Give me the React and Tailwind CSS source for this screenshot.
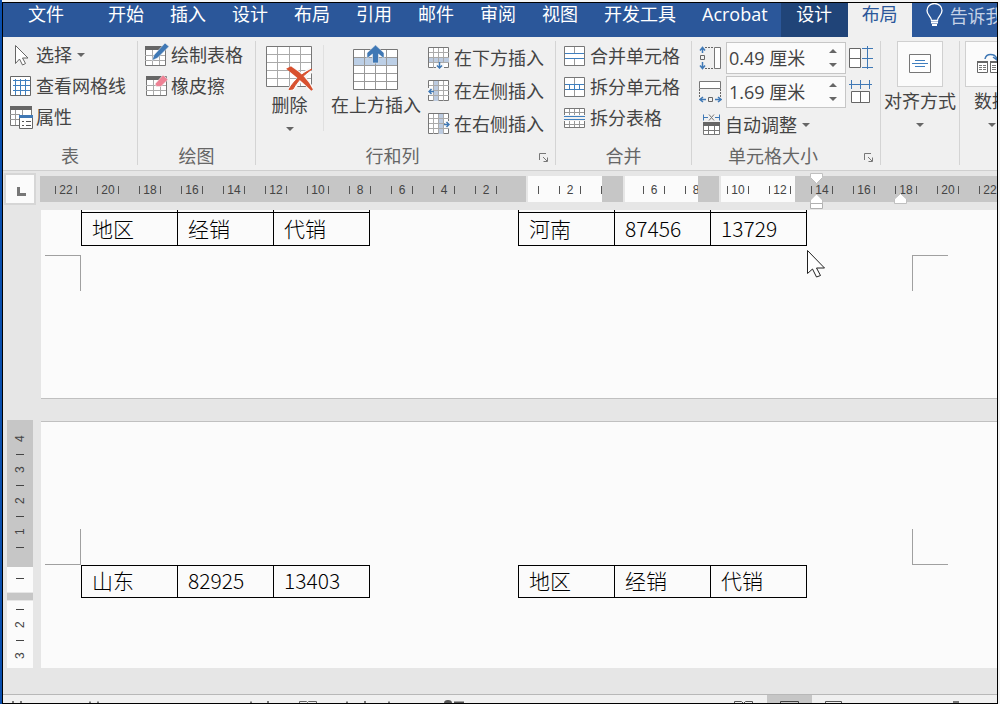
import clsx from 'clsx';

const TABS = ['开始', '插入', '设计', '布局', '引用', '邮件', '审阅', '视图', '开发工具', 'Acrobat'];

const RULER = [22, 20, 18, 16, 14, 12, 10, 8, 6, 4, 2, 0, 2, 4, 6, 8, 10, 12, 14, 16, 18, 20, 22];
const V_RULER = ['4', '3', '2', '1', '', '', '2', '3'];

/* ---------- icons ---------- */

function Icon({ w = 22, h = 22, children }) {
  return (
    <svg width={w} height={h} viewBox={`0 0 ${w} ${h}`} fill="none" className="shrink-0" aria-hidden="true">
      {children}
    </svg>
  );
}

function Caret({ up = false }) {
  return (
    <svg width="8" height="4" viewBox="0 0 8 4" className="shrink-0" aria-hidden="true">
      <path d={up ? 'M0 4h8L4 0z' : 'M0 0h8L4 4z'} fill="#666" />
    </svg>
  );
}

const SelectIcon = () => (
  <Icon>
    <path d="M5.500 1.500v18l4-4.500 3 6 3-1.500-3-5.500h5.500z" fill="#fff" stroke="#666" />
  </Icon>
);

const GridlinesIcon = () => (
  <Icon>
    <path d="M.5 1.500h20v19H.5z" fill="#fff" stroke="#666" />
    <path d="M5.500 4v16M10.500 4v16M15.500 4v16M3 5.500h17M3 10.500h17M3 15.500h17" stroke="#3f7fbf" />
  </Icon>
);

const PropertiesIcon = () => (
  <Icon w={23} h={23}>
    <path d="M.5.5h21v19H.5z" fill="#fff" stroke="#777" />
    <path d="M0 0h22v4H0z" fill="#666" />
    <path d="M0 8.500h10M0 13.500h9M5.500 4v15M12.500 4v6" stroke="#999" />
    <path d="M9.500 9.500h13v13h-13z" fill="#fff" stroke="#666" />
    <path d="M9 9h14v3H9z" fill="#3f78b5" />
    <path d="M12 15.500h2m2 0h5M12 19.500h2m2 0h5" stroke="#555" />
  </Icon>
);

const DrawTableIcon = () => (
  <Icon w={24} h={24}>
    <path d="M.5 3.500h20v19H.5z" fill="#fff" stroke="#777" />
    <path d="M0 3h21v4H0z" fill="#666" />
    <path d="M0 12.500h20M0 17.500h20M7.500 7v15M14.500 7v15" stroke="#aaa" />
    <path d="M20 0l4 3.500L12.500 15 7 17.500 9 12z" fill="#3f78b5" stroke="#f0f0f0" strokeWidth=".6" />
  </Icon>
);

const EraserIcon = () => (
  <Icon w={24} h={22}>
    <path d="M1.500 1.500h20v19h-20z" fill="#fff" stroke="#777" />
    <path d="M1 1h15v4H1z" fill="#666" />
    <path d="M1 10.500h20M1 15.500h20M8.500 5v15M15.500 5v15" stroke="#aaa" />
    <path d="M18 0l5 4.500-7 7h-4.500L10 9z" fill="#ee8295" stroke="#f0f0f0" strokeWidth=".6" />
  </Icon>
);

const DeleteIcon = () => (
  <Icon w={48} h={46}>
    <path d="M.5 1.500h45v40H.5z" fill="#fff" stroke="#777" />
    <path d="M11.500 2v39M23.500 2v39M34.500 2v39M1 9.500h44M1 17.500h44M1 25.500h44M1 33.500h44" stroke="#aaa" />
    <path d="M25 24c7 4 15 11 20 20M45 25c-7 5-13 11-20 19" stroke="#f8f8f8" strokeWidth="6" />
    <path d="M22 24l3-1.500c8 5 16 11 21 22.500-6-6-14-13-24-21z" fill="#d8512f" stroke="#d8512f" strokeWidth="2" />
    <path d="M46 24c-8 6-14 11-19 20l-4 .5c5-9 13-16 23-20.500z" fill="#d8512f" stroke="#d8512f" />
  </Icon>
);

const InsertAboveIcon = () => (
  <Icon w={46} h={46}>
    <path d="M.5 4.500h44v40H.5z" fill="#fff" stroke="#777" />
    <path d="M1 13h43v7H1z" fill="#bccfe6" />
    <path d="M11.500 5v39M22.500 5v39M33.500 5v39M1 12.500h43M1 20.500h43M1 28.500h43M1 36.500h43" stroke="#999" />
    <path d="M22.500 0l8.500 8v5.500L25.500 9v9h-6V9L14 13.500V8z" fill="#3f78b5" stroke="#f0f0f0" strokeWidth=".6" />
  </Icon>
);

const INSERT_ART = {
  below: { band: 'M1 11h20v5H1z', arrow: 'M11.500 15v6M9 18.500l2.500 2.500L14 18.500', clear: 'M8 16h8v6H8z' },
  left: { band: 'M6 1h5v20H6z', arrow: 'M6 11.500H1M3.500 9L1 11.500 3.500 14', clear: 'M0 8h5v7H0z' },
  right: { band: 'M11 1h5v20h-5z', arrow: 'M16 11.500h5M18.500 9l2.500 2.500-2.500 2.500', clear: 'M17 8h5v7h-5z' },
};

function InsertIcon({ side }) {
  const art = INSERT_ART[side];
  return (
    <Icon>
      <path d="M.5.500h20v20H.5z" fill="#fff" stroke="#777" />
      <path d={art.band} fill="#bccbe0" />
      <path d="M5.500 1v20M10.500 1v20M15.500 1v20M1 5.500h20M1 10.500h20M1 15.500h20" stroke="#aaa" />
      <path d={art.clear} fill="#f6f6f6" />
      <path d={art.arrow} stroke="#3f78b5" strokeWidth="1.500" />
    </Icon>
  );
}

const MergeIcon = () => (
  <Icon>
    <path d="M.5 1.500h20v19H.5z" fill="#fff" stroke="#777" />
    <path d="M10.500 2v6M10.500 14v6" stroke="#999" />
    <path d="M1 8.500h19M1 13.500h19" stroke="#3f7fbf" />
  </Icon>
);

const SplitCellsIcon = () => (
  <Icon>
    <path d="M.5 1.500h20v19H.5z" fill="#fff" stroke="#777" />
    <path d="M10.500 2v6M10.500 14v6" stroke="#999" />
    <path d="M1 8.500h19M1 13.500h19M5.500 8v5M10.500 8v5M15.500 8v5" stroke="#3f7fbf" />
  </Icon>
);

const SplitTableIcon = () => (
  <Icon>
    <path d="M.5 8v-6.500h20V8M.5 14v6.500h20V14" fill="#fff" stroke="#777" />
    <path d="M5.500 2v6M10.500 2v6M15.500 2v6M5.500 14v6M10.500 14v6M15.500 14v6M1 5.500h19M1 17.500h19" stroke="#999" />
    <path d="M0 9.500h21M0 12.500h21" stroke="#3f7fbf" />
  </Icon>
);

const RowHeightIcon = () => (
  <Icon w={23} h={24}>
    <path d="M6 1.500h9M6 22.500h9" stroke="#666" strokeDasharray="2 1" />
    <path d="M15.500 1.500h6v21h-6z" fill="#fff" stroke="#777" />
    <path d="M1.500 9.500h4v4h-4z" stroke="#666" />
    <path d="M3.500 7V2M1 4.500l2.500-3 2.500 3M3.500 16v6M1 19.500l2.500 3 2.500-3" stroke="#3f78b5" strokeWidth="1.500" />
  </Icon>
);

const ColWidthIcon = () => (
  <Icon w={23} h={24}>
    <path d="M.5 1.500h21v7H.5z" fill="#fff" stroke="#777" />
    <path d="M.5 9v8M21.500 9v8" stroke="#666" strokeDasharray="2 1" />
    <path d="M9.500 17.500h4v4h-4z" stroke="#666" />
    <path d="M7 19.500H1M4 17l-3 2.500L4 22M16 19.500h6M19 17l3 2.500-3 2.500" stroke="#3f78b5" strokeWidth="1.500" />
  </Icon>
);

const AutoFitIcon = () => (
  <Icon w={22} h={22}>
    <path d="M4.500.5v6M20.500.5v6M5 3.500h4M16 3.500h4" stroke="#3f78b5" />
    <path d="M10 .5l5 6M15 .5l-5 6" stroke="#777" />
    <path d="M4.500 8.500h16v12h-16z" fill="#fff" stroke="#777" />
    <path d="M4 8h17v4H4z" fill="#666" />
    <path d="M5 16.500h15M9.500 12v9M15.500 12v9" stroke="#777" />
  </Icon>
);

const DistributeRowsIcon = () => (
  <Icon w={25} h={24}>
    <path d="M.5 2.500h11v19H.5zM0 12.500h11" fill="#fff" stroke="#666" />
    <path d="M18.500 0v23M13 2.500h11M13 12.500h11M13 21.500h11" stroke="#3f78b5" />
  </Icon>
);

const DistributeColsIcon = () => (
  <Icon w={25} h={24}>
    <path d="M2.500 11.500h18v11h-18zM11.500 12v10" fill="#fff" stroke="#666" />
    <path d="M0 4.500h23M2.500 0v9M11.500 0v9M20.500 0v9" stroke="#3f78b5" />
  </Icon>
);

const AlignIcon = () => (
  <Icon w={22} h={20}>
    <path d="M.5.500h21v18H.5z" fill="#fff" stroke="#777" />
    <path d="M6 6.500h10M3 9.500h16M6 12.500h10" stroke="#3f7fbf" />
  </Icon>
);

const DataIcon = () => (
  <Icon w={30} h={22}>
    <path d="M8 6c1-6 10-6 12 0M16 4l4 3 2-5" stroke="#3f78b5" strokeWidth="1.500" />
    <path d="M.5 8.500h10v11H.5zM13.500 8.500h12v11h-12z" fill="#fff" stroke="#666" />
    <path d="M0 8h11v2H0zM13 8h13v2H13z" fill="#666" />
    <path d="M2 12.500h3m1 0h3M2 14.500h3m1 0h3M2 16.500h3m1 0h3M15 12.500h4m1 0h4M15 14.500h4m1 0h4M15 16.500h4m1 0h4" stroke="#777" />
  </Icon>
);

const LauncherIcon = () => (
  <Icon w={10} h={10}>
    <path d="M.5 7V.500H7M4 4l4 4M8.500 4.500v4h-4" stroke="#777" />
  </Icon>
);

const BulbIcon = () => (
  <Icon w={17} h={24}>
    <path
      d="M5.500 17.500c0-4-4.500-5-4.500-10a7.500 7 0 0 1 15 0c0 5-4.500 6-4.500 10z"
      stroke="#fff"
      strokeWidth="1.300"
    />
    <path d="M5 19.500h7M6 22h5" stroke="#fff" strokeWidth="2" />
  </Icon>
);

/* ---------- ribbon pieces ---------- */

function Tab({ children, className = 'px-[13px]' }) {
  return (
    <button type="button" role="tab" className={clsx('shrink-0 flex items-start leading-[22px]', className)}>
      {children}
    </button>
  );
}

function Group({ label, launcher, className, children }) {
  return (
    <section className={clsx('shrink-0 flex flex-col border-r border-[#d4d4d4]', className)}>
      <div className="flex-1 flex">{children}</div>
      <div className="h-[18px] flex items-center">
        <h2 className="flex-1 text-center leading-5 text-[#666]">{label}</h2>
        {launcher && (
          <button type="button" aria-label={`${label}选项`} className="w-[26px] flex pt-1 pl-[10px]">
            <LauncherIcon />
          </button>
        )}
      </div>
    </section>
  );
}

function Command({ icon, children, caret }) {
  return (
    <button type="button" className="h-7 flex items-center gap-1 whitespace-nowrap">
      <span className="w-[22px] flex">{icon}</span>
      {children}
      {caret && <span className="pl-px flex"><Caret /></span>}
    </button>
  );
}

function BigCommand({ icon, children, caret, className }) {
  return (
    <button type="button" className={clsx('shrink-0 flex flex-col items-center whitespace-nowrap', className)}>
      {icon}
      <span className="leading-7">{children}</span>
      {caret && <span className="pt-2 flex"><Caret /></span>}
    </button>
  );
}

function SizeField({ id, label, icon, value, action, actionLabel }) {
  return (
    <div className="h-8 flex items-center">
      <label htmlFor={id} className="w-[27px]" aria-label={label}>{icon}</label>
      <div className="w-[120px] h-8 flex border border-[#c6c6c6] bg-[#fbfbfb]">
        <input id={id} type="text" defaultValue={value} className="w-[96px] pl-[2px] bg-transparent outline-none" />
        <div className="w-[20px] flex flex-col items-center justify-between py-[6px]">
          <button type="button" aria-label="增加" className="flex"><Caret up /></button>
          <button type="button" aria-label="减少" className="flex"><Caret /></button>
        </div>
      </div>
      <button type="button" aria-label={actionLabel} className="pl-[3px]">{action}</button>
    </div>
  );
}

function Ribbon() {
  return (
    <div className="flex overflow-hidden border-b border-[#cfcfcf] bg-[#f0f0f0] pt-1 pb-[5px] h-[134px]">
      <Group label="表" className="w-[135px]">
        <div className="pl-[7px] flex flex-col gap-[3px]">
          <Command icon={<SelectIcon />} caret>选择</Command>
          <Command icon={<GridlinesIcon />}>查看网格线</Command>
          <Command icon={<PropertiesIcon />}>属性</Command>
        </div>
      </Group>
      <Group label="绘图" className="w-[118px]">
        <div className="pl-[7px] flex flex-col gap-[3px]">
          <Command icon={<DrawTableIcon />}>绘制表格</Command>
          <Command icon={<EraserIcon />}>橡皮擦</Command>
        </div>
      </Group>
      <Group label="行和列" launcher className="w-[300px]">
        <div className="flex h-[94px]">
          <BigCommand icon={<DeleteIcon />} caret className="w-[67px] pt-1">删除</BigCommand>
          <div className="my-1 border-r border-[#e0e0e0]" />
          <BigCommand icon={<InsertAboveIcon />} className="w-[104px] pt-1">在上方插入</BigCommand>
        </div>
        <div className="pt-[3px] flex flex-col gap-[5px]">
          <Command icon={<InsertIcon side="below" />}>在下方插入</Command>
          <Command icon={<InsertIcon side="left" />}>在左侧插入</Command>
          <Command icon={<InsertIcon side="right" />}>在右侧插入</Command>
        </div>
      </Group>
      <Group label="合并" className="w-[136px]">
        <div className="pl-2 pt-px flex flex-col gap-[3px]">
          <Command icon={<MergeIcon />}>合并单元格</Command>
          <Command icon={<SplitCellsIcon />}>拆分单元格</Command>
          <Command icon={<SplitTableIcon />}>拆分表格</Command>
        </div>
      </Group>
      <Group label="单元格大小" launcher className="w-[189px]">
        <div className="pl-[7px] pt-px flex flex-col gap-[2px]">
          <SizeField
            id="row-height"
            label="高度"
            icon={<RowHeightIcon />}
            value="0.49 厘米"
            action={<DistributeRowsIcon />}
            actionLabel="分布行"
          />
          <SizeField
            id="col-width"
            label="宽度"
            icon={<ColWidthIcon />}
            value="1.69 厘米"
            action={<DistributeColsIcon />}
            actionLabel="分布列"
          />
          <div className="pt-px">
            <Command icon={<AutoFitIcon />} caret>自动调整</Command>
          </div>
        </div>
      </Group>
      <Group className="w-[79px]">
        <BigCommand
          icon={<span className="w-[46px] h-[46px] flex items-center justify-center border border-[#d0d0d0] bg-[#fbfbfb]"><AlignIcon /></span>}
          caret
          className="w-[78px]"
        >
          对齐方式
        </BigCommand>
      </Group>
      <Group className="w-[66px]">
        <BigCommand
          icon={<span className="w-[54px] h-[46px] flex items-center justify-center border border-[#d0d0d0] bg-[#fbfbfb]"><DataIcon /></span>}
          caret
          className="pl-[5px]"
        >
          数据
        </BigCommand>
      </Group>
    </div>
  );
}

/* ---------- rulers ---------- */

function HorizontalRuler() {
  return (
    <div className="flex-1 min-w-0 grid overflow-hidden h-[26px] bg-[#c6c6c6]">
      <div className="[grid-area:1/1] flex">
        <div className="w-[488px] shrink-0 border-r-2 border-[#e6e6e6]" />
        <div className="w-[267px] shrink-0 bg-[#fbfbfb]" />
      </div>
      <div className="[grid-area:1/1] flex items-center pt-px pl-[5px] font-['Liberation_Sans',sans-serif] text-xs text-[#444]">
        {RULER.map((n, i) => (
          <div key={i} className="w-[42px] shrink-0 grid grid-cols-[10px_1px_20px_1px_10px] items-center">
            <span />
            <span className={clsx('h-2', n !== 0 && 'bg-[#555]')} />
            <span className="text-center">{n || ''}</span>
            <span className="h-2 bg-[#555]" />
          </div>
        ))}
      </div>
      {/* column boundaries sit over the scale */}
      <div className="[grid-area:1/1] flex pl-[562px]">
        <div className="w-[23px] shrink-0 border-r-2 border-[#e6e6e6] bg-[#c6c6c6]" />
        <div className="w-[73px] shrink-0" />
        <div className="w-[23px] shrink-0 border-r-2 border-[#e6e6e6] bg-[#c6c6c6]" />
      </div>
    </div>
  );
}

function IndentMarkers() {
  return (
    <>
      <svg width="14" height="38" viewBox="0 0 14 38" className="absolute left-[807px] top-0.5" aria-hidden="true">
        <path d="M.5.500h12v4l-6 6-6-6zM.5 31v-4l6-6 6 6v4z" fill="#fff" stroke="#c0c0c0" />
        <path d="M.5 30.500h12v5H.5z" fill="#fff" stroke="#b0b0b0" />
      </svg>
      <svg width="14" height="12" viewBox="0 0 14 12" className="absolute left-[891px] top-[22px]" aria-hidden="true">
        <path d="M.5 10.500V6l6-5.500 6 5.500v4.500z" fill="#fff" stroke="#c0c0c0" />
      </svg>
    </>
  );
}

function VerticalRuler() {
  return (
    <div className="w-[26px] h-[248px] grid overflow-hidden">
      <div className="[grid-area:1/1] flex flex-col">
        <div className="h-[147px] bg-[#c6c6c6]" />
        <div className="h-[25px] bg-[#fbfbfb]" />
        <div className="h-[9px] border-y border-[#e6e6e6] bg-[#c6c6c6]" />
        <div className="h-[67px] bg-[#fbfbfb]" />
      </div>
      <div className="[grid-area:1/1] pt-[11px] flex flex-col items-center font-['Liberation_Sans',sans-serif] text-xs text-[#444]">
        {V_RULER.map((n, i) => (
          <div key={i} className="flex flex-col items-center">
            <span className="h-4 leading-4 flex items-center justify-center rotate-180 [writing-mode:vertical-rl]">{n}</span>
            <span className="h-[15px] flex items-center"><span className="w-2 h-px bg-[#444]" /></span>
          </div>
        ))}
      </div>
    </div>
  );
}

/* ---------- document ---------- */

function SalesTable({ cells, continued }) {
  return (
    <table className={clsx('table-fixed w-[289px] border-separate border-spacing-0 border-l border-black', !continued && 'border-t')}>
      <tbody>
        {continued && (
          <tr className="h-[3px]">
            {cells.map((c) => <td key={c} className="p-0 border-r border-b border-black" />)}
          </tr>
        )}
        <tr className={continued ? 'h-[33px]' : 'h-8'}>
          {cells.map((c) => (
            <td key={c} className="pt-0 pr-0 pb-[3px] pl-2.5 border-r border-b border-black leading-7">{c}</td>
          ))}
        </tr>
      </tbody>
    </table>
  );
}

function CropMarks({ side }) {
  const edge = side === 'top' ? 'border-b' : 'border-t';
  return (
    <div className="pl-1 flex gap-[831px]">
      <div className={clsx('w-9 h-9 shrink-0 border-r border-[#a0a0a0]', edge)} />
      <div className={clsx('w-9 h-9 shrink-0 border-l border-[#a0a0a0]', edge)} />
    </div>
  );
}

function StatusBar() {
  return (
    <footer className="h-[9px] shrink-0 overflow-hidden flex justify-between border-t border-[#b8b8b8] bg-[#f0f0f0]">
      <svg width="470" height="8" viewBox="0 0 470 8" fill="none" className="shrink-0" aria-hidden="true">
        <path d="M9 7h2M17 7h2M86 7.500h2M94 7.500h2M247 7.500h2M264 7h2M343 7.500h2M361 7h2M385 7.500h2" stroke="#777" strokeWidth="2" />
        <path d="M296.500 8V6.500h7l1 1 1-1h8V8" stroke="#666" />
        <path d="M441 8a4 3 0 0 1 8 0zM451 6.500h10V8h-10z" fill="#555" />
      </svg>
      <div className="shrink-0 flex pr-[38px]">
        <button type="button" aria-label="阅读视图" className="w-[46px] flex items-end pl-[13px]">
          <Icon w={20} h={2}><path d="M.5 3V.500h7l2 2 2-2h7V3" stroke="#555" /></Icon>
        </button>
        <button type="button" aria-label="页面视图" className="w-[45px] flex items-end justify-center bg-[#c6c6c6]">
          <Icon w={20} h={2}><path d="M.5 3V.500h18V3" stroke="#444" /></Icon>
        </button>
        <button type="button" aria-label="Web 版式视图" className="w-[141px] flex items-end pl-[13px]">
          <Icon w={18} h={2}><path d="M.5 3V.500h16V3" stroke="#555" /></Icon>
        </button>
        <Icon w={6} h={8}><path d="M0 6h6v2H0z" fill="#777" /></Icon>
      </div>
    </footer>
  );
}

export default function App() {
  return (
    <div className="h-screen overflow-hidden flex pr-[2px] bg-[#f4f4f4] border-l-2 border-[#0a4fae] font-['Open_Sans','Noto_Sans_CJK_SC',sans-serif] text-lg text-[#444]">
      <div className="flex-1 min-w-0 mt-[2px] flex flex-col border border-black bg-[#e6e6e6]">
        <nav role="tablist" className="h-[34px] shrink-0 flex overflow-hidden whitespace-nowrap bg-[#2b579a] text-white">
          <Tab className="w-[92px] pl-[25px]">文件</Tab>
          {TABS.map((t) => <Tab key={t}>{t}</Tab>)}
          <Tab className="w-[67px] justify-center bg-[#204478]">设计</Tab>
          <Tab className="w-16 justify-center bg-[#f0f0f0] text-[#2b579a]">布局</Tab>
          <button type="button" className="shrink-0 flex items-start gap-[7px] pl-[14px] text-[#c5d2e6]">
            <BulbIcon />
            <span className="leading-[26px]">告诉我你想要做什么</span>
          </button>
        </nav>

        <Ribbon />

        <div className="relative h-[39px] shrink-0 flex items-start">
          <button type="button" aria-label="制表符" className="w-[32px] h-[32px] ml-px mt-[2px] mr-1 pl-[2px] pt-1 flex items-center justify-center border-2 border-[#d6d6d6] bg-[#fbfbfb]">
            <Icon w={9} h={9}><path d="M1.500 0v7.500H9" stroke="#777" strokeWidth="3" /></Icon>
          </button>
          <div className="flex-1 min-w-0 flex pt-[5px]">
            <HorizontalRuler />
          </div>
          <IndentMarkers />
        </div>

        <div className="relative flex-1 min-h-0 overflow-hidden flex">
          <div className="w-[38px] shrink-0 pl-1 pt-[210px]">
            <VerticalRuler />
          </div>
          <main className="flex-1 min-w-0 overflow-hidden flex flex-col font-['Noto_Sans_CJK_SC',sans-serif] font-light text-[21px] text-black">
            <article className="h-[189px] shrink-0 border-b border-[#c0c0c0] bg-[#fbfbfb]">
              <div className="pl-10 flex gap-[148px]">
                <SalesTable cells={['地区', '经销', '代销']} continued />
                <SalesTable cells={['河南', '87456', '13729']} continued />
              </div>
              <div className="pt-[9px]"><CropMarks side="bottom" /></div>
            </article>
            <article className="mt-[22px] h-[247px] shrink-0 border-t border-[#c0c0c0] bg-[#fbfbfb]">
              <div className="pt-[107px]"><CropMarks side="top" /></div>
              <div className="pl-10 flex gap-[148px]">
                <SalesTable cells={['山东', '82925', '13403']} />
                <SalesTable cells={['地区', '经销', '代销']} />
              </div>
            </article>
          </main>
          <svg width="20" height="28" viewBox="0 0 20 28" className="absolute left-[804px] top-10" aria-hidden="true">
            <path d="M.5.500v23l5-4.500 4 8 4-1.500-4-7.500h8z" fill="#fff" stroke="#222" />
          </svg>
        </div>

        <StatusBar />
      </div>
    </div>
  );
}
